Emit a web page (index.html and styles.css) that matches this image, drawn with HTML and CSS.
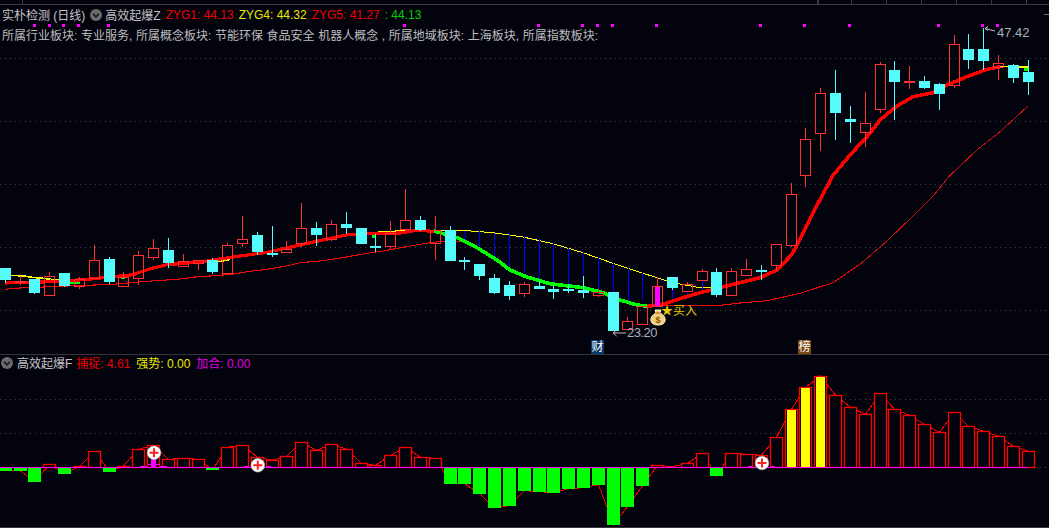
FILE: index.html
```html
<!DOCTYPE html>
<html lang="zh">
<head>
<meta charset="utf-8">
<title>实朴检测 (日线)</title>
<link rel="stylesheet" href="styles.css">
</head>
<body>
<main class="terminal">
  <section class="pane pane-main">
    <svg class="ruler" id="ruler" viewBox="0 0 1049 5" width="1049" height="5"></svg>
    <svg class="chart chart-main" id="mainChart" viewBox="0 5 1049 349" width="1049" height="349"></svg>
    <div class="legend">
      <div class="legend-row">
        <span class="name">实朴检测 (日线)</span>
        <svg class="chevron" viewBox="0 0 12 12" width="12" height="12"><circle cx="6" cy="6" r="6" fill="#6b6b6b"/><path d="M3 4.8 6 7.8 9 4.8" fill="none" stroke="#16161c" stroke-width="1.6"/></svg>
        <span class="name">高效起爆Z</span>
        <span class="val red val-zyg">ZYG1: 44.13</span>
        <span class="val yellow val-zyg">ZYG4: 44.32</span>
        <span class="val red val-zyg">ZYG5: 41.27</span>
        <span class="val green">: 44.13</span>
      </div>
      <div class="legend-row sectors">所属行业板块: 专业服务, 所属概念板块: 节能环保 食品安全 机器人概念 , 所属地域板块: 上海板块, 所属指数板块:</div>
    </div>
    <span class="tag tag-high">47.42</span>
    <span class="tag tag-low">23.20</span>
    <span class="buy">★买入</span>
    <span class="badge badge-cai">财</span>
    <span class="badge badge-bang">榜</span>
  </section>
  <section class="pane pane-sub">
    <svg class="chart chart-sub" id="subChart" viewBox="0 355 1049 172" width="1049" height="172"></svg>
    <div class="legend legend-sub">
      <div class="legend-row">
        <svg class="chevron chevron-sub" viewBox="0 0 12 12" width="12" height="12"><circle cx="6" cy="6" r="6" fill="#6b6b6b"/><path d="M3 4.8 6 7.8 9 4.8" fill="none" stroke="#16161c" stroke-width="1.6"/></svg>
        <span class="name name-sub">高效起爆F</span>
        <span class="val red val-sub">捕捉: 4.61</span>
        <span class="val yellow val-sub">强势: 0.00</span>
        <span class="val magenta">加合: 0.00</span>
      </div>
    </div>
  </section>
</main>
<script src="chart.js"></script>
</body>
</html>
```
FILE: styles.css
```css
* { box-sizing: border-box; }
html, body { margin: 0; padding: 0; background: #03030e; }
body {
  width: 1049px;
  height: 528px;
  overflow: hidden;
  font-family: "Liberation Sans", "Noto Sans CJK SC", sans-serif;
  font-size: 12px;
  color: #c4c4c4;
}
.terminal { display: flex; flex-direction: column; width: 1049px; }
.pane { position: relative; width: 1049px; }
.pane-main { height: 355px; border-bottom: 1px solid #34343a; display: flex; flex-direction: column; }
.pane-sub { height: 173px; border-bottom: 1px solid #34343a; }
.ruler, .chart { display: block; flex: none; }

.legend { position: absolute; left: 2px; top: 7px; display: flex; flex-direction: column; gap: 5px; }
.legend-sub { left: 1px; top: 0; }
.legend-row { display: flex; align-items: center; height: 15px; white-space: pre; }
.sectors { color: #bdbdbd; word-spacing: 0.3px; }
.name { color: #c4c4c4; }
.chevron { margin: 0 3px 0 5px; flex: none; }
.chevron-sub { margin: 0 4px 0 0; }
.val { flex: none; }
.val-zyg { width: 73px; }
.name + .val-zyg { margin-left: 5px; }
.name-sub { margin-right: 4px; }
.val-sub { width: 60px; }
.red { color: #f00000; }
.yellow { color: #e8e800; }
.green { color: #00d000; }
.magenta { color: #e000e0; }

.tag { position: absolute; font-size: 13px; color: #a8b0b8; line-height: 15px; }
.tag-high { left: 997px; top: 25px; }
.tag-low { left: 627px; top: 325px; letter-spacing: -0.5px; }
.buy { position: absolute; left: 661px; top: 304px; color: #e4ca00; font-size: 12px; line-height: 15px; }
.badge {
  position: absolute;
  top: 340px;
  width: 13px;
  height: 14px;
  color: #fff;
  font-size: 12px;
  line-height: 14px;
  text-align: center;
}
.badge-cai { left: 591px; background: #0a3a6c; }
.badge-bang { left: 798px; background: #7a4a10; }
```
FILE: chart.js
```js
const BG = '#03030e', RED = '#ff3030', CYAN = '#54fcfc', LINE = '#ff0000', YEL = '#ffff00', GRN = '#00ff00', BLUE = '#0000ff', MAG = '#ff00ff';
const X = i => Math.floor(5.3 + 14.826 * i) + 0.5;
const px = v => Math.round(v) + 0.5;
const pts = a => a.map(p => p.join(',')).join(' ');

// [type, high, low, bodyTop, bodyBottom]
const candles = [
  ['c',268,283,268,280],['r',276,285,280.5,282],['c',279,294,279,293],['r',272,295,276,295],['c',273,287,273,286],
  ['r',277,289,279,286],['r',245,279,260,278],['c',257,284,259,282],['r',272,286,277,286],['r',251,285,255,278],
  ['r',239,260,248,257],['c',238,268,250,263],['r',254,266,261,266],['r',260,270,260,263],['c',258,274,260,272],
  ['r',243,274,245,273],['r',216,247,239,243],['c',232,255,235,252],['c',226,257,253,254],['r',241,253,249,252],
  ['r',203,247,228,243],['c',222,246,228,235],['r',220,241,224,239],['c',212,234,224,228],['c',228,244,228,244],
  ['c',234,252,246,247],['r',221,249,233,246],['r',189,229,220,229],['c',216,231,220,230],['r',216,260,230,243],
  ['c',226,261,230,261],['c',257,270,260,262],['c',264,280,264,276],['c',274,294,278,293],['c',281,300,285,296],
  ['r',282,297,284,293],['c',281,289,286,289],['c',285,299,289,292],['c',284,293,289,291],['c',276,298,290,293],
  ['r',289,297,292,295],['c',292,331,292,331],['r',317,329,321,329],['r',306,324,306,324],['r',277,306,286,306],
  ['c',277,290,277,288],['r',282,291,284,291],['r',269,281,271,280],['c',268,297,272,295],['r',268,295,271,295],
  ['r',259,275,269,275],['c',265,280,270,271],['r',244,271,244,265],['r',183,247,194,245],['r',128,187,139,175],
  ['r',88,151,93,133],['c',70,140,93,113],['c',106,143,119,122],['r',92,147,123,132],['r',62,113,64,109],
  ['c',61,120,70,82],['r',66,89,81,83],['c',76,89,81,88],['c',83,110,84,94],['r',35,88,44,85],
  ['c',34,69,49,60],['c',28,70,49,61],['r',55,80,63,67],['c',64,83,65,78],['c',60,95,72,82]
];

const subVals = [470.7,471,481.7,464.3,473.7,466.3,451.3,471.7,466,449.3,445.3,459.3,458.3,459.3,469.7,447.3,445.3,457.3,460.3,456.3,442.3,450.3,444.3,449.3,463.3,465.3,455.3,447.3,457.3,458.3,483.7,483.7,493.7,507.7,505.7,490.7,491.7,492.7,488.7,487.7,484.7,524.7,506.7,485.7,465.3,466.7,463.3,453.3,475.7,453.3,454.3,455.3,437.3,409.3,387.3,376,395.3,407.3,414.3,393.3,409.3,415.3,424.3,432.3,412.3,426.3,431.3,436.3,446.3,451.3];

const maLeft = [[5,283],[15,282.5],[43,282],[87,279.5],[100,278],[133,274.7],[150,268.7],[167,264.7],[200,262],[233,257],[267,252.3],[300,245],[333,237.7],[350,234.3],[400,233],[417,230.3],[436,231.5]];
const maGreen = [[434,231],[457,237.7],[477,247.7],[497,260],[510,270],[527,277],[550,283.7],[583,287.7],[603,292.7],[620,300],[637,305],[648,306.3]];
const maRight = [[647,306.3],[663,304.3],[683,297.7],[700,292.7],[717,288.7],[733,284.3],[760,277.7],[777,270],[792,254.3],[800,239.3],[813,212.7],[833,175.5],[850,155],[870,133.3],[880,120],[897,106],[913,96.7],[933,92.7],[947,85],[967,76.7],[987,69.3],[1000,66.7]];
const slowLow = [[5,289.3],[13,288.3],[43,287],[58,286.3],[87,285.3],[113,284.3],[131,282.7],[147,281.3],[162,280.3],[177,279.3],[195,277],[210,276],[232,274.3],[247,271.7],[267,269.3],[290,265.3],[300,262.7],[320,261],[343,257.7],[350,256.3],[367,253.3],[383,251],[410,246],[430,242.7],[447,241],[465,242]];
const slowRight = [[637,306],[700,305.3],[720,305.3],[740,303],[767,300.7],[800,293.3],[833,282.7],[860,264.3]];
const slowFar = [[860,264.3],[887,241],[913,216],[933,196],[950,175.5],[977,150],[1000,131.7],[1028,106]];
const yellowLeft = [[10,275.3],[24,276],[32,277.3],[43,278.3],[58,280.3],[85,280],[115,277],[133,274.7],[150,269],[167,265],[200,262],[208,262],[227,260.5],[233,257],[267,252.3],[300,245],[333,237.7],[350,234],[417,230]];
const yellowRight = [[417,230],[467,230.7],[493,232.7],[523,237],[553,243.7],[583,252.7],[613,263.3],[643,273.3],[673,282.7],[700,287.7],[712,287.2]];
const blues = [[465.5,231,243],[479.5,231,251],[494.5,233,259],[509.5,233,269],[524.5,236,276],[539.5,239,281],[553.5,243,283],[568.5,248,285],[583.5,252,288],[598.5,257,291],[613.5,263,292],[628.5,268,303],[642.5,273,300],[672.5,288,301],[687.5,291,298],[702.5,280,292],[20.5,276,280],[50.5,279,281]];
const greenBits = [[70,282,80,282],[121,277.5,125,277.5],[372,236.5,376,236.5],[1024,69.5,1029,69.5]];
const dots = [34.5,49.5,63.5,78.5,108.5,404.5,538.5,582.5,597.5,612.5,656.5,760.5,804.5,849.5,938.5,982.5,997.5];
const ticks = [22.5,817.5,851.5,886.5,921.5,956.5,991.5,1026.5];

function poly(p, color, w, crisp = true) {
  return `<polyline points="${pts(p)}" fill="none" stroke="${color}" stroke-width="${w}"${crisp ? ' shape-rendering="crispEdges"' : ''}/>`;
}
function seg(x1, y1, x2, y2, color, w = 1) {
  return `<line x1="${x1}" y1="${y1}" x2="${x2}" y2="${y2}" stroke="${color}" stroke-width="${w}" shape-rendering="crispEdges"/>`;
}
function grid(ys) {
  return ys.map(y => `<line x1="0" x2="1049" y1="${y}" y2="${y}" stroke="#45454a" stroke-width="1" stroke-dasharray="1 4" shape-rendering="crispEdges"/>`).join('');
}

/* ruler */
let ruler = seg(0, 4.5, 1049, 4.5, '#3a3a40') + seg(818.5, 0, 818.5, 4, '#3a3a40');
ticks.forEach(x => { ruler += seg(x, 0, x, 4, '#3a3a40'); });
document.getElementById('ruler').innerHTML = ruler;

/* main chart */
let m = grid([58.5, 121.5, 184.5, 247.5, 310.5]);
dots.forEach(x => { m += `<rect x="${x - 1.5}" y="24" width="3" height="3" fill="${MAG}"/>`; });
m += poly(slowLow, '#f00808', 1.1) + poly(slowRight, '#f00808', 1.1) + poly(slowFar, '#c81010', 1);
m += poly(yellowLeft, YEL, 1.6) + poly(yellowRight, YEL, 1);
blues.forEach(([x, a, b]) => { m += seg(x, a, x, b, BLUE); });
greenBits.forEach(([a, b, c, d]) => { m += seg(a, b, c, d, GRN, 3); });
m += poly([[1000, 66.5], [1029, 67]], YEL, 1.4);
m += poly(maLeft, LINE, 3.2) + poly(maGreen, GRN, 3.6) + poly(maRight, LINE, 3.6);
candles.forEach(([t, hi, lo, top, bot], i) => {
  const x = X(i);
  if (t === 'c') {
    m += seg(x, hi, x, lo, CYAN);
    m += `<rect x="${x - 5.5}" y="${Math.round(top)}" width="11" height="${Math.max(2, Math.round(bot) - Math.round(top))}" fill="${CYAN}"/>`;
  } else {
    const h = Math.round(bot) - Math.round(top);
    if (h < 3) {
      m += seg(x, hi, x, lo, RED);
      m += `<rect x="${x - 5.5}" y="${Math.round(top)}" width="11" height="2" fill="${RED}"/>`;
    } else {
      m += seg(x, hi, x, px(top), RED) + seg(x, px(bot), x, lo, RED);
      if (i === 44) m += `<rect x="${x - 2.5}" y="${px(top)}" width="5" height="${h}" fill="${MAG}"/>`;
      m += `<rect x="${x - 5}" y="${px(top)}" width="10" height="${h}" fill="none" stroke="${RED}" shape-rendering="crispEdges"/>`;
    }
  }
});
/* price arrows */
m += `<path d="M995 31 L985 28.5 M985 28.5 l3 -2 M985 28.5 l3 2" fill="none" stroke="#c0c0c0" stroke-width="1"/>`;
m += `<path d="M626 333 H613 M613 333 l3.5 -3 M613 333 l3.5 3" fill="none" stroke="#c0c0c0" stroke-width="1"/>`;
m += seg(1044, 14.5, 1049, 14.5, '#707070');
/* money bag */
m += `<g>
  <path d="M655 310 h6 l-1 3 q6 3 5 8 q-1 4 -7 4 q-6 0 -7 -4 q-1 -5 5 -8 z" fill="#f2cf78" stroke="#fff4cf" stroke-width="1"/>
  <path d="M655.5 313 h5" stroke="#b06a10" stroke-width="1.2"/>
  <text x="658" y="322.5" text-anchor="middle" font-size="9" font-weight="700" fill="#8a4e08" font-family="Liberation Sans, sans-serif">$</text>
</g>`;
document.getElementById('mainChart').innerHTML = m;

/* sub chart */
const BASE = 467;
let s = grid([399.5, 433.5, 467.5]);
s += poly(subVals.map((v, i) => [X(i), v]), LINE, 1);
subVals.forEach((v, i) => {
  const x = X(i);
  if (v > BASE) {
    s += `<rect x="${x - 6.5}" y="${BASE}" width="13" height="${Math.round(v) - BASE}" fill="${GRN}"/>`;
  } else if (i !== 45) {
    const t = Math.round(v);
    s += `<rect x="${x - 6}" y="${t + 0.5}" width="12" height="${BASE - t}" fill="${BG}" stroke="${LINE}" stroke-width="1.3"/>`;
    if (i >= 53 && i <= 55) s += `<rect x="${x - 4.5}" y="${t + 1}" width="9" height="${BASE - t}" fill="${YEL}"/>`;
  }
});
s += seg(0, 467.5, 1028, 467.5, MAG);
s += `<rect x="151" y="458" width="5" height="9" fill="${MAG}"/>`;
[[140,147,466.3],[148,160,464.7],[160,167,466.3],[244,249,466.3],[267,271,466.3],[748,752,466.3],[771,775,466.3]].forEach(([a,b,y]) => { s += seg(a, y, b, y, MAG); });
function plus(cx, cy) {
  return `<g><circle cx="${cx}" cy="${cy}" r="6.8" fill="#fff" stroke="#b8b8b8" stroke-width=".6"/><path d="M${cx - 4.5} ${cy} H${cx + 4.5} M${cx} ${cy - 4.5} V${cy + 4.5}" stroke="#ff2020" stroke-width="2"/></g>`;
}
s += plus(154, 452.7) + plus(257.8, 465.3) + plus(762, 463);
document.getElementById('subChart').innerHTML = s;
```
